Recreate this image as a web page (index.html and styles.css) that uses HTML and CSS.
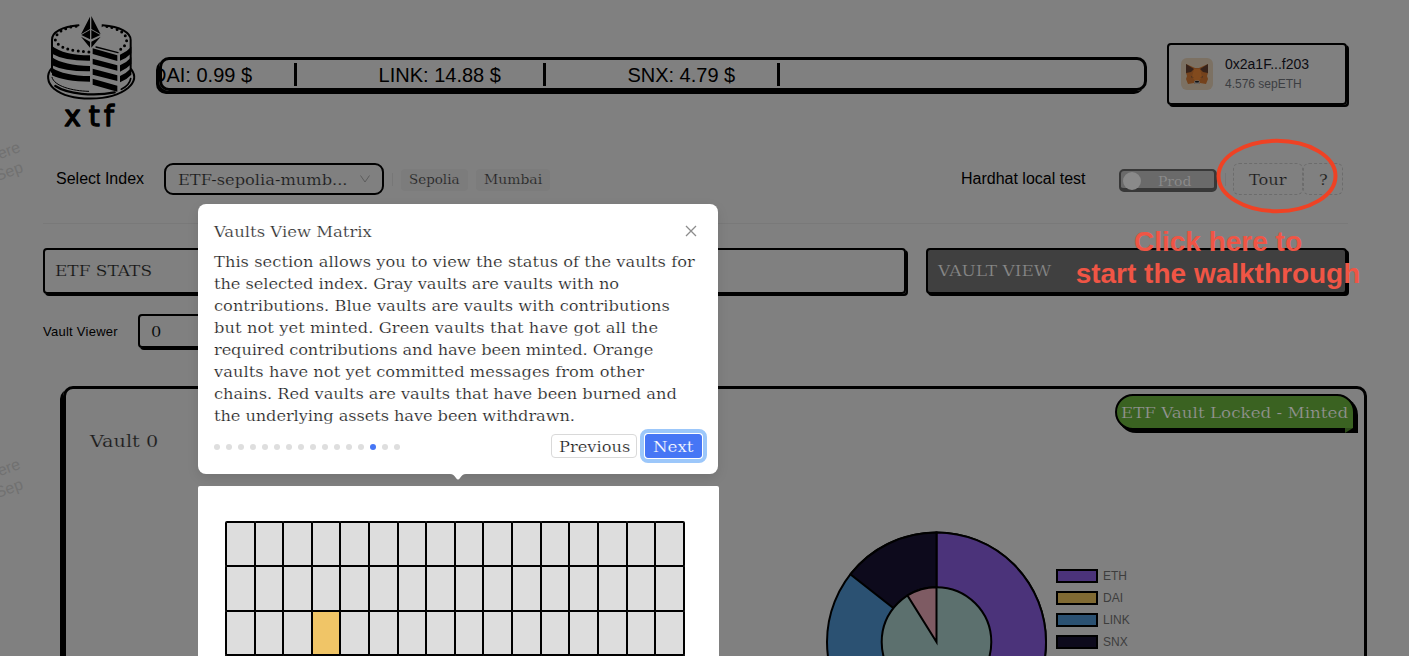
FILE: index.html
```
<!DOCTYPE html>
<html lang="en">
<head>
<meta charset="utf-8">
<title>xtf - Vault View</title>
<link rel="stylesheet" href="styles.css">
</head>
<body>
<div class="page">
  <header class="header">
    <svg class="logo" viewBox="0 0 282 360">
      <g fill="none" stroke="#000" stroke-width="6" stroke-linecap="round">
        <path d="M104 40C55 44 23 60 24 84V180"/>
        <path d="M176 40C230 44 260 62 260 84V178"/>
        <path d="M22 170C8 186 8 212 30 230C80 270 200 270 252 228C275 208 274 188 262 172"/>
        <path d="M24 196C30 222 84 237 134 238" stroke-width="3"/>
        <path d="M34 222C70 246 150 254 212 241" stroke-width="7"/>
        <path d="M232 232C248 224 258 212 260 200" stroke-width="5"/>
        <path d="M156 105L222 122" stroke-width="4"/>
        <path d="M39 68C55 48 85 43 110 41M172 41C220 46 246 62 248 84C248 96 238 108 224 116M34 84C42 108 84 118 138 120" stroke-width="9" stroke-dasharray="0 16"/>
      </g>
      <path d="M24 102Q60 130 138 130V146Q62 147 24 125ZM24 136Q60 161 138 162V178Q62 179 24 160ZM24 167Q60 191 138 192V209Q62 209 24 190Z"/>
      <path d="M146 109L220 130V147L146 126ZM146 140L220 160V176L146 157ZM146 170L220 190V207L146 188ZM146 200L220 221V239L146 218Z"/>
      <path d="M228 128Q248 120 262 104V124Q248 139 228 146ZM228 160Q248 152 262 136V156Q248 171 228 179ZM228 192Q248 183 262 168V188Q248 203 228 211Z"/>
      <path fill="#808080" d="M108 8H173V66L146 108H134L106 66Z"/>
      <path d="M138 14V51L111 67ZM142 12V51L170 67ZM138 54V82L112 69ZM142 54V82L169 69ZM138 89V107L111 74ZM142 89V107L170 74Z"/>
      <text class="logo-text" x="61 134 180" y="343">xtf</text>
    </svg>
    <div class="ticker">
      <span class="tick first">DAI: 0.99 $</span><span class="tick">LINK: 14.88 $</span><span class="tick">SNX: 4.79 $</span>
    </div>
    <div class="wallet">
      <svg class="fox" viewBox="0 0 32 32">
        <rect width="32" height="32" rx="6" fill="#7c7163"/>
        <path fill="#74421c" d="M5 6L14 10H18L27 6L27 15L26 18L27 21L25 26L19 25L18 26H14L13 25L7 26L5 21L6 18L5 15Z"/>
        <path fill="#37231a" d="M5 6L13 11L10 14L5 15ZM27 6L19 11L22 14L27 15Z"/>
        <path fill="#824a1d" d="M13 11H19L21 19L18 23H14L11 19Z"/>
        <path fill="#4a3322" d="M10 18L13 19.500H10ZM22 18L19 19.500H22Z"/>
        <path fill="#666" d="M13 24L14 22.500H18L19 24L18 26H14Z"/>
        <path fill="#111" d="M14 23H18L17.500 24.500H14.500Z"/>
      </svg>
      <div class="wallet-info"><div class="addr">0x2a1F...f203</div><div class="balance">4.576 sepETH</div></div>
    </div>
  </header>

  <div class="controls">
    <span class="label">Select Index</span>
    <div class="select"><span class="slab">ETF-sepolia-mumb...</span>
      <svg class="chev" viewBox="0 0 10 8"><path d="M.5 .5L5 7L9.500 .5" fill="none" stroke="#5c5c5c"/></svg>
    </div>
    <i class="vline"></i>
    <span class="tag sepolia"><span class="slab">Sepolia</span></span>
    <span class="tag mumbai"><span class="slab">Mumbai</span></span>
    <span class="label net">Hardhat local test</span>
    <div class="toggle"><i class="knob"></i><span class="slab">Prod</span></div>
    <i class="vline v2"></i>
    <div class="dashed tour"><span class="slab">Tour</span></div>
    <div class="dashed help"><span class="slab">?</span></div>
  </div>
  <div class="rule"></div>

  <div class="tabs">
    <div class="tab stats"><span class="slab">ETF STATS</span></div>
    <div class="tab view"><span class="slab">VAULT VIEW</span></div>
  </div>

  <div class="viewer"><span class="viewer-label">Vault Viewer</span><div class="input"><span class="slab">0</span></div></div>

  <section class="card">
    <div class="card-head">
      <span class="slab vault-name">Vault 0</span>
      <div class="badge"><span class="slab">ETF Vault Locked - Minted</span>
        <svg class="fold" viewBox="0 0 8 5"><path d="M0 0H8L0 5Z" fill="#2c4a19"/></svg>
      </div>
    </div>
    <div class="card-body">
      <div class="panel"><div class="matrix" id="matrix"></div></div>
      <svg class="donut" viewBox="825 486 224 170">
        <g stroke="#000" stroke-width="2">
          <circle cx="936.500" cy="642" r="109.500" fill="#2b5172"/>
          <path d="M936.500 642V532.500A109.500 109.500 0 0 1 936.500 751.500Z" fill="#4b337a"/>
          <path d="M936.500 642L850.400 574.300A109.500 109.500 0 0 1 936.500 532.500Z" fill="#0d0a1c"/>
          <circle cx="936.500" cy="642" r="54.800" fill="#5c706e"/>
          <path d="M936.500 642L907.500 595.500A54.800 54.800 0 0 1 936.500 587.200Z" fill="#7e5b63"/>
        </g>
      </svg>
      <ul class="legend">
        <li><i class="eth"></i>ETH</li><li><i class="dai"></i>DAI</li><li><i class="link"></i>LINK</li><li><i class="snx"></i>SNX</li>
      </ul>
    </div>
  </section>
</div>

<div class="watermark w1"><span>here</span><span class="second">Sep</span></div>
<div class="watermark w2"><span>here</span><span class="second">Sep</span></div>

<div class="popup">
  <div class="popup-head"><span class="slab">Vaults View Matrix</span>
    <svg class="close" viewBox="0 0 12 12"><path d="M1 1L11 11M11 1L1 11" stroke="#8c8c8c" stroke-width="1.300"/></svg>
  </div>
  <div class="copy">
    <div class="slab l1">This section allows you to view the status of the vaults for</div>
    <div class="slab l2">the selected index. Gray vaults are vaults with no</div>
    <div class="slab l3">contributions. Blue vaults are vaults with contributions</div>
    <div class="slab l4">but not yet minted. Green vaults that have got all the</div>
    <div class="slab l5">required contributions and have been minted. Orange</div>
    <div class="slab l6">vaults have not yet committed messages from other</div>
    <div class="slab l7">chains. Red vaults are vaults that have been burned and</div>
    <div class="slab l8">the underlying assets have been withdrawn.</div>
  </div>
  <div class="popup-foot">
    <div class="dots"><i></i><i></i><i></i><i></i><i></i><i></i><i></i><i></i><i></i><i></i><i></i><i></i><i></i><i class="on"></i><i></i><i></i></div>
    <div class="btn prev"><span class="slab">Previous</span></div>
    <div class="btn next"><span class="slab">Next</span></div>
  </div>
  <svg class="arrow" viewBox="0 0 16 6"><path d="M0 0H16C13 0 12 1.500 10 4Q8 7 6 4C4 1.500 3 0 0 0Z" fill="#fff"/></svg>
</div>

<svg class="ring" viewBox="0 0 122 76"><ellipse cx="61" cy="38" rx="58.500" ry="35.200" fill="none" stroke="#ef4224" stroke-width="4"/></svg>
<div class="callout">Click here to<br>start the walkthrough</div>
<script src="matrix.js"></script>
</body>
</html>
```
FILE: styles.css
```
* { box-sizing: border-box; }
body { margin: 0; width: 1409px; height: 656px; overflow: hidden; position: relative; background: #808080; color: #000; font-family: "Liberation Sans", Arial, sans-serif; }
.page { height: 656px; overflow: hidden; padding-left: 43px; }
.slab { display: inline-block; font-family: "DejaVu Serif", serif; font-size: 14px; white-space: nowrap; transform: translateY(1px) scaleX(1.16); transform-origin: left center; -webkit-text-stroke: .2px #808080; }

.header { display: flex; align-items: flex-start; height: 163px; }
.logo { width: 94px; height: 120px; margin: 12px 0 0 1px; overflow: visible; }
.logo-text { font-family: "DejaVu Sans", sans-serif; font-size: 84px; stroke: #000; stroke-width: 4; stroke-linejoin: round; }
.ticker { display: flex; align-items: center; width: 988px; height: 34px; margin: 57px 0 0 21px; padding-top: 1px; border: 3px solid #000; border-radius: 10px; box-shadow: -3px 3px 0 #000; overflow: hidden; font-size: 20px; white-space: nowrap; }
.tick { height: 23px; line-height: 24px; padding: 0 42px 0 81.5px; border-right: 3px solid #000; }
.tick.first { padding-left: 0; margin-left: -10px; }
.wallet { display: flex; align-items: center; width: 180px; height: 62px; margin: 43px 0 0 20px; padding-left: 12px; border: 2px solid #000; border-radius: 4px; box-shadow: 2px 2px 0 #000; }
.fox { width: 32px; height: 32px; }
.wallet-info { margin-left: 12px; }
.addr { font-size: 14px; line-height: 20px; color: #0c0c12; }
.balance { font-size: 12px; line-height: 21px; color: #3c3e42; }

.controls { display: flex; align-items: center; height: 32px; padding-left: 13px; }
.label { font-size: 16px; width: 108px; margin-bottom: 1px; white-space: nowrap; }
.select { width: 220px; height: 32px; border: 2px solid #000; border-radius: 9px; padding: 0 12px; display: flex; align-items: center; justify-content: space-between; color: #1a1a1a; }
.chev { width: 10px; height: 8px; margin-right: 0; }
.vline { width: 1px; height: 13px; background: #777; margin: 0 8px; }
.v2 { margin: 0 7px 0 8px; }
.tag { height: 22px; line-height: 20px; padding-left: 8px; border-radius: 4px; background: #7c7c7c; color: #222; margin-top: 2px; }
.tag .slab { font-size: 12px; }
.sepolia { width: 67px; margin-right: 8px; }
.sepolia .slab { transform: scaleX(1.12); }
.mumbai { width: 74px; }
.mumbai .slab { transform: scaleX(1.16); }
.net { width: 158px; margin-left: 411px; }
.toggle { width: 98px; height: 23px; margin-top: 2px; border: 2px solid #383838; border-bottom-width: 4px; border-right-width: 3px; border-radius: 5px; background: #6a6a6a; display: flex; align-items: center; color: #909090; }
.toggle .slab { font-size: 12px; margin: 4px 0 0 17px; -webkit-text-stroke-color: #6a6a6a; }
.knob { flex: none; width: 18px; height: 18px; border-radius: 50%; background: #8a8a8a; margin: 4px 0 0 2px; }
.dashed { height: 32px; border: 1px dashed #6c6c6c; border-radius: 6px; padding-left: 15px; line-height: 30px; color: #1a1a1a; }
.tour { width: 70px; }
.help { width: 40px; }
.rule { width: 1305px; height: 1px; margin-top: 28px; background: #797979; }

.tabs { display: flex; gap: 20px; margin-top: 24px; }
.tab { height: 46px; padding-left: 10px; line-height: 40px; border: 2px solid #000; border-radius: 4px; box-shadow: 2px 2px 0 #000; }
.stats { width: 863px; color: #151515; }
.view { width: 421px; background: #404040; color: #8a8a8a; }
.stats .slab { transform: translateY(1px) scaleX(1.21); }
.view .slab { transform: translateY(1px) scaleX(1.215); -webkit-text-stroke-color: #404040; }

.viewer { display: flex; align-items: center; height: 34px; margin-top: 20px; }
.viewer-label { font-size: 13px; width: 95px; letter-spacing: .26px; }
.input { width: 250px; height: 34px; line-height: 29px; padding-left: 11px; border: 2px solid #000; border-radius: 4px; box-shadow: 2px 2px 0 #000; }

.card { width: 1304px; height: 300px; margin: 38px 0 0 20px; border: 3px solid #000; border-radius: 10px; box-shadow: -3px 3px 0 #000; }
.card-head { display: flex; justify-content: space-between; height: 97px; padding: 5px 9px 0 24px; }
.vault-name { font-size: 16px; line-height: 24px; margin-top: 35px; color: #1c1c1c; transform: translateY(1px) scaleX(1.2); }
.badge { position: relative; width: 240px; height: 36px; line-height: 31px; padding-left: 4px; border: 2px solid #000; border-radius: 18px 18px 0 18px; background: #3a6221; box-shadow: 3px 3px 0 #000; color: #959595; }
.badge .slab { transform: translateY(1px) scaleX(1.195); -webkit-text-stroke-color: #3a6221; }
.fold { position: absolute; right: 0; top: 32px; width: 8px; height: 5px; }
.card-body { display: flex; align-items: flex-start; }
.panel { width: 521px; height: 200px; margin-left: 132px; padding: 36px 0 0 28px; background: #fff; border-radius: 2px; flex: none; }
.matrix { display: grid; grid-template-columns: repeat(16, 28.62px); grid-auto-rows: 44.4px; width: 458px; }
.cell { background: #ddd; border: 1px solid #000; border-radius: 1px; box-shadow: 0 0 0 1px #000; }
.cell.orange { background: #f0c567; }
.donut { width: 224px; height: 170px; margin-left: 106px; flex: none; }
.legend { list-style: none; margin: 79px 0 0 7px; padding: 0; font-size: 12px; color: #3d3d3d; }
.legend li { display: flex; align-items: center; height: 22px; }
.legend i { width: 42px; height: 14px; margin-right: 5px; border: 2px solid #000; }
.eth { background: #4b337a; }
.dai { background: #806a33; }
.link { background: #2b5172; }
.snx { background: #0d0a1c; }

.watermark { position: absolute; left: 0; width: 24px; height: 60px; overflow: hidden; color: #717171; font-size: 16px; line-height: 20px; }
.watermark span { display: block; transform: rotate(-20deg); transform-origin: left bottom; margin: 15px 0 0 -7px; white-space: nowrap; }
.watermark .second { margin: -1px 0 0 -1px; }
.w1 { top: 132px; }
.w2 { top: 449px; }

.popup { position: absolute; left: 198px; top: 204px; width: 520px; height: 270px; padding: 16px; border-radius: 8px; background: #fff; color: #1a1a1a; box-shadow: 0 4px 12px rgba(0, 0, 0, .1); }
.popup .slab { -webkit-text-stroke-color: #fff; }
.popup-head { display: flex; justify-content: space-between; align-items: center; height: 22px; color: #2e2e2e; }
.popup-head .slab { transform: translateY(1px) scaleX(1.175); }
.close { width: 12px; height: 12px; margin-right: 5px; }
.copy { margin-top: 8px; }
.copy .slab { display: block; height: 22px; line-height: 22px; }
.l1 { letter-spacing: .04px; }
.l2 { letter-spacing: -.05px; }
.l3 { letter-spacing: .01px; }
.l4 { letter-spacing: .08px; }
.l5 { letter-spacing: -.11px; }
.l6 { letter-spacing: .05px; }
.l7 { letter-spacing: -.03px; }
.l8 { letter-spacing: -.08px; }
.popup-foot { display: flex; align-items: center; margin-top: 8px; height: 24px; }
.dots { display: flex; gap: 6px; width: 337px; margin-top: 2px; }
.dots i { width: 6px; height: 6px; border-radius: 50%; background: #dedede; }
.dots .on { background: #4676f5; }
.btn { height: 24px; border: 1px solid #d9d9d9; border-radius: 4px; line-height: 21px; padding-left: 7px; }
.prev { width: 86px; margin-right: 8px; }
.next { width: 57px; background: #4676f5; border-color: #4676f5; color: #fff; outline: 4px solid #9cc7fa; outline-offset: 1px; border-radius: 3px; }
.popup .next .slab { transform: translateY(1px) scaleX(1.19); -webkit-text-stroke-color: #4676f5; }
.arrow { position: absolute; left: 252px; top: 270px; width: 16px; height: 6px; }

.ring { position: absolute; left: 1216px; top: 138px; width: 122px; height: 76px; }
.callout { position: absolute; left: 1067px; top: 226px; width: 302px; text-align: center; font-weight: 700; font-size: 28px; line-height: 32px; color: #f05545; white-space: nowrap; }
```
FILE: matrix.js
```
const matrix = document.getElementById('matrix');
for (let i = 0; i < 64; i++) {
  const cell = document.createElement('div');
  cell.className = i === 35 ? 'cell orange' : 'cell';
  matrix.appendChild(cell);
}
```
